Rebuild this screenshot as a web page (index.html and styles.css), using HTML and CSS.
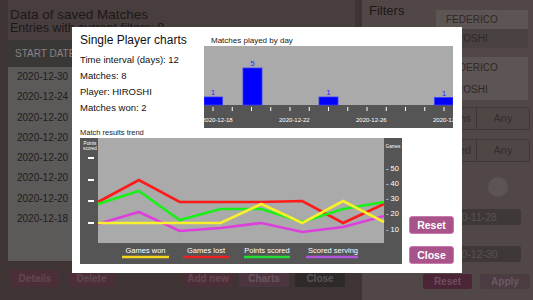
FILE: index.html
```html
<!DOCTYPE html>
<html>
<head>
<meta charset="utf-8">
<link rel="stylesheet" href="styles.css">
</head>
<body>
<div class="app">
  <main class="main">
    <header class="head">
      <h1 class="head-title">Data of saved Matches</h1>
      <p class="head-sub">Entries with current filters: 8</p>
    </header>
    <section class="table">
      <div class="table-head">START DATE</div>
      <ul class="table-body">
        <li>2020-12-30</li>
        <li>2020-12-24</li>
        <li>2020-12-20</li>
        <li>2020-12-20</li>
        <li>2020-12-20</li>
        <li>2020-12-20</li>
        <li>2020-12-20</li>
        <li>2020-12-18</li>
      </ul>
    </section>
    <nav class="actions">
      <button class="btn btn-wine">Details</button>
      <button class="btn btn-wine btn-narrow">Delete</button>
      <button class="btn btn-wine btn-push">Add new</button>
      <button class="btn btn-rose">Charts</button>
      <button class="btn btn-dark">Close</button>
    </nav>
  </main>
  <aside class="filters">
    <div class="filters-top">
      <h2 class="filters-title">Filters</h2>
      <ul class="plist">
        <li class="plist-item plist-light">FEDERICO</li>
        <li class="plist-item plist-dark">HIROSHI</li>
      </ul>
    </div>
    <ul class="plist plist-second">
      <li class="plist-item plist-light">FEDERICO</li>
      <li class="plist-item plist-light">HIROSHI</li>
    </ul>
    <div class="seg seg-first"><span class="seg-label">Wins</span><span class="seg-val">Any</span></div>
    <div class="seg seg-second"><span class="seg-label">Played</span><span class="seg-val">Any</span></div>
    <div class="knob"></div>
    <div class="datebox datebox-first">2020-11-28</div>
    <div class="datebox datebox-second">2020-12-30</div>
    <div class="factions">
      <button class="fbtn fbtn-reset">Reset</button>
      <button class="fbtn fbtn-apply">Apply</button>
    </div>
  </aside>
</div>

<div class="modal">
  <div class="modal-top">
    <div class="info">
      <h2 class="info-title">Single Player charts</h2>
      <p class="info-line">Time interval (days): 12</p>
      <p class="info-line">Matches: 8</p>
      <p class="info-line">Player: HIROSHI</p>
      <p class="info-line">Matches won: 2</p>
    </div>
    <figure class="bars">
      <figcaption class="chart-caption bars-caption">Matches played by day</figcaption>
      <svg class="chart-svg" width="249" height="82" viewBox="0 0 249 82">
        <rect x="0" y="0" width="249" height="59" fill="#aaaaaa"/>
        <rect x="0" y="59" width="249" height="23" fill="#555555"/>
        <g fill="#0000ff" stroke="#3a3aff" stroke-width="0.8">
          <rect x="0" y="51" width="18.5" height="8"/>
          <rect x="39" y="22" width="19" height="37"/>
          <rect x="115" y="51" width="19" height="8"/>
          <rect x="230.5" y="51.5" width="18.5" height="7.5"/>
        </g>
        <g class="bar-val" fill="#2b2bff" text-anchor="middle">
          <text x="9" y="49">1</text>
          <text x="48.5" y="20">5</text>
          <text x="124.5" y="49">1</text>
          <text x="240" y="49.5">1</text>
        </g>
        <g stroke="#ffffff" stroke-width="1">
          <line x1="9" y1="61" x2="9" y2="65"/>
          <line x1="28.25" y1="61" x2="28.25" y2="65"/>
          <line x1="47.5" y1="61" x2="47.5" y2="65"/>
          <line x1="66.75" y1="61" x2="66.75" y2="65"/>
          <line x1="86" y1="61" x2="86" y2="65"/>
          <line x1="105.25" y1="61" x2="105.25" y2="65"/>
          <line x1="124.5" y1="61" x2="124.5" y2="65"/>
          <line x1="143.75" y1="61" x2="143.75" y2="65"/>
          <line x1="163" y1="61" x2="163" y2="65"/>
          <line x1="182.25" y1="61" x2="182.25" y2="65"/>
          <line x1="201.5" y1="61" x2="201.5" y2="65"/>
          <line x1="220.75" y1="61" x2="220.75" y2="65"/>
          <line x1="240" y1="61" x2="240" y2="65"/>
        </g>
        <g class="bar-date" fill="#ffffff">
          <text x="-2" y="75.5">2020-12-18</text>
          <text x="75" y="75.5">2020-12-22</text>
          <text x="152" y="75.5">2020-12-26</text>
          <text x="229" y="75.5">2020-12-30</text>
        </g>
      </svg>
    </figure>
  </div>
  <p class="chart-caption trend-caption">Match results trend</p>
  <div class="modal-bottom">
    <svg class="chart-svg" width="322" height="126" viewBox="0 0 322 126">
      <rect x="0" y="0" width="322" height="126" fill="#555555"/>
      <rect x="18" y="0" width="286" height="105" fill="#aaaaaa"/>
      <g class="axis-tiny" fill="#ffffff" text-anchor="middle">
        <text x="10" y="7">Points</text>
        <text x="10" y="12">scored</text>
        <text x="313" y="10">Games</text>
      </g>
      <g stroke="#ffffff" stroke-width="2">
        <line x1="8" y1="20" x2="14" y2="20"/>
        <line x1="8" y1="42" x2="14" y2="42"/>
        <line x1="8" y1="63" x2="14" y2="63"/>
        <line x1="8" y1="85" x2="14" y2="85"/>
      </g>
      <g class="axis-num" fill="#ffffff">
        <text x="306" y="32.5">- 50</text>
        <text x="306" y="47.5">- 40</text>
        <text x="306" y="62.5">- 30</text>
        <text x="306" y="77.5">- 20</text>
        <text x="306" y="93.5">- 10</text>
      </g>
      <g fill="none" stroke-width="2.6" stroke-linejoin="miter">
        <polyline stroke="#ff1a1a" points="18,64 58.9,42 99.7,64 140.6,64 181.4,64 222.3,63 263.1,85 304,66"/>
        <polyline stroke="#1aef1a" points="18,66 58.9,53 99.7,82 140.6,71 181.4,71 222.3,84 263.1,71 304,64"/>
        <polyline stroke="#dd3fdd" points="18,86 58.9,74 99.7,93 140.6,90 181.4,85 222.3,94 263.1,89 304,78"/>
        <polyline stroke="#f8f02a" points="18,85 58.9,85 99.7,85 140.6,85 181.4,66 222.3,85 263.1,63 304,84"/>
      </g>
      <g class="legend" fill="#ffffff" text-anchor="middle">
        <text x="65.5" y="114.5">Games won</text>
        <text x="126" y="114.5">Games lost</text>
        <text x="187" y="114.5">Points scored</text>
        <text x="253" y="114.5">Scored serving</text>
      </g>
      <g stroke-width="2.6">
        <line x1="42" y1="119" x2="89" y2="119" stroke="#f5d41e"/>
        <line x1="103" y1="119" x2="149" y2="119" stroke="#ee2222"/>
        <line x1="164" y1="119" x2="210" y2="119" stroke="#22dd33"/>
        <line x1="226" y1="119" x2="278" y2="119" stroke="#b455e0"/>
      </g>
    </svg>
    <div class="modal-actions">
      <button class="mbtn">Reset</button>
      <button class="mbtn">Close</button>
    </div>
  </div>
</div>
</body>
</html>
```

FILE: styles.css
```css
* {
  box-sizing: border-box;
  margin: 0;
  padding: 0;
}

html, body {
  width: 533px;
  height: 300px;
  overflow: hidden;
}

body {
  font-family: "Liberation Sans", Arial, sans-serif;
  background: #3e3434;
  position: relative;
}

button {
  font-family: "Liberation Sans", Arial, sans-serif;
  border: none;
}

ul {
  list-style: none;
}

.app {
  display: flex;
  height: 300px;
}

/* ---------- main (left) ---------- */
.main {
  width: 362px;
  padding: 0 7px 0 8px;
  display: flex;
  flex-direction: column;
  background: #3e3434;
}

.head {
  height: 40px;
  background: #483e3e;
  padding: 7px 0 0 2px;
  color: #1d1818;
}

.head-title {
  font-size: 13.5px;
  font-weight: normal;
  line-height: 15px;
}

.head-sub {
  font-size: 12.5px;
  line-height: 13px;
  white-space: nowrap;
}

.table {
  height: 221px;
  background: #5c5959;
  display: flex;
  flex-direction: column;
}

.table-head {
  height: 27px;
  background: #3a3737;
  color: #878282;
  font-size: 10px;
  line-height: 27px;
  padding-left: 7px;
}

.table-body li {
  height: 20.3px;
  line-height: 20.3px;
  font-size: 10px;
  color: #1f1d1d;
  padding-left: 9px;
}

.actions {
  margin-top: 9px;
  height: 17px;
  display: flex;
  gap: 6px;
  padding: 0 10px 0 2px;
}

.btn {
  width: 50px;
  height: 17px;
  border-radius: 2px;
  font-size: 10px;
  font-weight: bold;
  line-height: 17px;
}

.btn-narrow {
  width: 49px;
  margin-left: 1px;
}

.btn-push {
  margin-left: auto;
}

.btn-wine {
  background: #4a2f39;
  color: #654650;
}

.btn-rose {
  background: #4d3540;
  color: #6c5460;
}

.btn-dark {
  background: #2e2a2a;
  color: #595555;
}

/* ---------- filters (right) ---------- */
.filters {
  flex: 1;
  background: #514747;
  display: flex;
  flex-direction: column;
  align-items: flex-end;
}

.filters-top {
  width: 100%;
  display: flex;
  justify-content: space-between;
  align-items: flex-start;
  padding: 3px 5px 0 7px;
}

.filters-title {
  font-size: 13px;
  font-weight: normal;
  line-height: 15px;
  color: #1c1818;
}

.plist {
  width: 92px;
  margin-top: 7px;
}

.plist-second {
  margin: 9px 5px 0 0;
  width: 120px;
}

.plist-item {
  height: 19px;
  line-height: 19px;
  font-size: 10px;
  padding-left: 10px;
  color: #2e2828;
}

.plist-second .plist-item {
  height: 21.5px;
  line-height: 21.5px;
  padding-left: 38px;
}

.plist-light {
  background: #5d5454;
}

.plist-dark {
  background: #4a4242;
}

.seg {
  width: 130px;
  height: 23px;
  margin-right: 3px;
  display: flex;
  border: 1px solid #3f3737;
  border-radius: 3px;
  background: #4f4646;
  font-size: 11px;
  line-height: 21px;
  color: #352d2d;
}

.seg-first {
  margin-top: 7px;
}

.seg-second {
  margin-top: 9px;
}

.seg-label {
  width: 76px;
  text-align: right;
  padding-right: 5px;
  border-right: 1px solid #3f3737;
}

.seg-val {
  flex: 1;
  text-align: center;
}

.knob {
  width: 20px;
  height: 20px;
  border-radius: 50%;
  background: #5d5454;
  margin: 15px 25px 0 0;
}

.datebox {
  width: 98px;
  height: 16px;
  margin-right: 12px;
  background: #3f3838;
  border-radius: 2px;
  font-size: 10.5px;
  line-height: 16px;
  color: #5a5252;
  padding-left: 21px;
}

.datebox-first {
  margin-top: 12px;
}

.datebox-second {
  margin-top: 21px;
}

.factions {
  margin: 12px 3px 0 0;
  display: flex;
  gap: 8px;
}

.fbtn {
  width: 50px;
  height: 15px;
  border-radius: 2px;
  font-size: 10px;
  font-weight: bold;
  line-height: 15px;
}

.fbtn-reset {
  width: 49px;
  background: #4a2535;
  color: #6e4d5d;
}

.fbtn-apply {
  background: #4b3c42;
  color: #6a5a62;
}

/* ---------- modal ---------- */
.modal {
  position: absolute;
  left: 72px;
  top: 27px;
  width: 390px;
  height: 246px;
  background: #ffffff;
  padding: 6px 8px 9px 8px;
  display: flex;
  flex-direction: column;
  color: #111111;
}

.modal-top {
  height: 95px;
  display: flex;
}

.info {
  width: 124px;
}

.info-title {
  font-size: 12px;
  font-weight: normal;
  line-height: 14px;
  margin-bottom: 5px;
  white-space: nowrap;
}

.info-line {
  font-size: 9.5px;
  line-height: 16px;
  white-space: nowrap;
}

.bars {
  width: 249px;
  display: flex;
  flex-direction: column;
}

.chart-caption {
  font-size: 8px;
  line-height: 10px;
  color: #222222;
}

.bars-caption {
  height: 13px;
  padding: 3px 0 0 7px;
}

.trend-caption {
  height: 10px;
  font-size: 7.5px;
}

.chart-svg {
  display: block;
  font-family: "Liberation Sans", Arial, sans-serif;
}

.bar-val {
  font-size: 8px;
}

.bar-date {
  font-size: 6px;
}

.axis-tiny {
  font-size: 4.6px;
}

.axis-num {
  font-size: 7.5px;
}

.legend {
  font-size: 7.5px;
}

.modal-bottom {
  height: 126px;
  display: flex;
  gap: 7px;
}

.modal-actions {
  width: 45px;
  display: flex;
  flex-direction: column;
  justify-content: flex-end;
  gap: 12px;
}

.mbtn {
  height: 18px;
  border-radius: 3px;
  background: #a8548b;
  border: 1px solid #c87cae;
  color: #ffffff;
  font-size: 10.5px;
  font-weight: bold;
  line-height: 16px;
}
```
